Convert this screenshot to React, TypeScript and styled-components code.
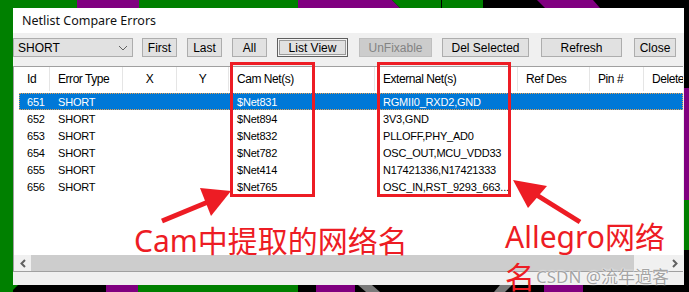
import styled, { createGlobalStyle } from "styled-components";

const GlobalStyle = createGlobalStyle`
    html, body {
        margin: 0;
        padding: 0;
        overflow: hidden;
        background: #000;
    }
`;

const Desktop = styled.div`
    position: relative;
    width: 689px;
    height: 292px;
    overflow: hidden;
    box-sizing: border-box;
    padding: 8px 0 0 13px;
`;

const Art = styled.svg`
    position: absolute;
    left: 0;
    top: 0;
`;

const Window = styled.div`
    position: relative;
    width: 671px;
    height: 277px;
    background: #f0f0f0;
    display: flex;
    flex-direction: column;
    font-family: "Liberation Sans", Arial, sans-serif;
`;

const TitleBar = styled.div`
    height: 25px;
    background: #fff;
    display: flex;
    align-items: center;
    padding-left: 9px;
    font-family: "Noto Sans", "Open Sans", sans-serif;
    font-size: 12.5px;
    color: #111;
`;

const Toolbar = styled.div`
    display: flex;
    gap: 9px;
    margin-top: 5px;
    height: 19px;
`;

const Combo = styled.div`
    width: 120px;
    box-sizing: border-box;
    border: 1px solid #adadad;
    background: #e1e1e1;
    display: flex;
    align-items: center;
    justify-content: space-between;
    padding: 0 4px 0 4px;
    font-size: 12px;
    color: #000;
`;

const Button = styled.div<{ $w: number; $push?: number; $pressed?: boolean; $disabled?: boolean }>`
    width: ${(p) => p.$w}px;
    margin-left: ${(p) => p.$push ?? 0}px;
    box-sizing: border-box;
    display: flex;
    align-items: center;
    justify-content: center;
    font-size: 12px;
    color: ${(p) => (p.$disabled ? "#838383" : "#000")};
    background: ${(p) => (p.$disabled ? "#cccccc" : "#e1e1e1")};
    border: 1px solid ${(p) => (p.$pressed ? "#5f5f5f" : p.$disabled ? "#bfbfbf" : "#adadad")};
    box-shadow: ${(p) => (p.$pressed ? "inset 0 0 0 1px #f4f4f4, inset 0 0 0 2px #9a9a9a" : "none")};
`;

const ListBox = styled.div`
    margin-top: 9px;
    width: 670px;
    height: 206px;
    box-sizing: border-box;
    border-top: 1px solid #a0a0a0;
    border-left: 1px solid #a0a0a0;
    border-bottom: 1px solid #a0a0a0;
    background: #fff;
    display: flex;
    flex-direction: column;
    overflow: hidden;
`;

const columns = "31px 73px 54px 52px 146px 143px 72px 54px 60px";

const Header = styled.div`
    display: grid;
    grid-template-columns: ${columns};
    height: 24px;
    padding-left: 5px;
    font-size: 12px;
    letter-spacing: -0.45px;
    color: #000;
`;

const HeadCell = styled.div<{ $center?: boolean }>`
    display: flex;
    align-items: center;
    justify-content: ${(p) => (p.$center ? "center" : "flex-start")};
    padding-left: ${(p) => (p.$center ? 0 : 8)}px;
    border-right: 1px solid #e5e5e5;
    white-space: nowrap;
    overflow: hidden;
`;

const Rows = styled.div`
    flex: 1;
    padding: 2px 0 0 5px;
`;

const Row = styled.div<{ $selected?: boolean }>`
    display: grid;
    grid-template-columns: ${columns};
    height: 17px;
    box-sizing: border-box;
    font-size: 11px;
    letter-spacing: -0.2px;
    color: ${(p) => (p.$selected ? "#fff" : "#000")};
    background: ${(p) => (p.$selected ? "#0078d7" : "transparent")};
    border: 1px dotted ${(p) => (p.$selected ? "#e8a050" : "transparent")};
`;

const Cell = styled.div`
    display: flex;
    align-items: center;
    padding-left: 7px;
    white-space: nowrap;
    overflow: hidden;
`;

const ScrollBar = styled.div`
    height: 16px;
    display: flex;
    background: #f0f0f0;
`;

const ScrollArrow = styled.div`
    width: 17px;
    display: flex;
    align-items: center;
    justify-content: center;
`;

const Thumb = styled.div`
    width: 603px;
    background: #cdcdcd;
`;

const Track = styled.div`
    flex: 1;
`;

const Overlay = styled.svg`
    position: absolute;
    left: 0;
    top: 0;
    pointer-events: none;
`;

const Note = styled.div<{ $x: number; $y: number; $w?: number }>`
    position: absolute;
    left: ${(p) => p.$x}px;
    top: ${(p) => p.$y}px;
    width: ${(p) => (p.$w ? `${p.$w}px` : "auto")};
    font-family: "Noto Sans", "Noto Sans CJK SC", sans-serif;
    font-size: 30px;
    line-height: 40px;
    color: #ed1c24;
    white-space: ${(p) => (p.$w ? "normal" : "nowrap")};
`;

const Watermark = styled.div`
    position: absolute;
    left: 536px;
    top: 263px;
    font-family: "Noto Sans", "Noto Sans CJK SC", sans-serif;
    font-size: 17px;
    color: #a4a4a4;
    white-space: nowrap;
    text-shadow: 0 0 1px #fff, 0 0 2px #fff;
`;

const rows = [
    { id: "651", cam: "$Net831", ext: "RGMII0_RXD2,GND" },
    { id: "652", cam: "$Net894", ext: "3V3,GND" },
    { id: "653", cam: "$Net832", ext: "PLLOFF,PHY_AD0" },
    { id: "654", cam: "$Net782", ext: "OSC_OUT,MCU_VDD33" },
    { id: "655", cam: "$Net414", ext: "N17421336,N17421333" },
    { id: "656", cam: "$Net765", ext: "OSC_IN,RST_9293_663..." },
];

const G = "#008000";
const P = "#800080";

const App = () => {
    return (
        <Desktop>
            <GlobalStyle />
            <Art width="689" height="292">
                <rect width="689" height="292" fill="#000" />
                <rect x="0" y="0" width="13" height="292" fill={G} />
                <rect x="0" y="0" width="77" height="8" fill={G} />
                <rect x="77" y="0" width="62" height="8" fill={P} />
                <rect x="139" y="0" width="159" height="8" fill={G} />
                <polygon points="298,0 392,0 400,8 298,8" fill={P} />
                <polygon points="392,0 483,0 483,8 400,8" fill={G} />
                <rect x="441" y="0" width="1" height="8" fill="#000" />
                <polygon points="537,0 593,0 600,8 545,8" fill={P} />
                <rect x="684" y="88" width="5" height="112" fill={P} />
                <rect x="684" y="200" width="5" height="50" fill={G} />
                <polygon points="13,285 18,285 13,290" fill={G} />
                <rect x="106" y="285" width="32" height="7" fill={P} />
                <rect x="138" y="285" width="160" height="7" fill={G} />
                <rect x="316" y="285" width="39" height="7" fill={P} />
                <polygon points="358,285 372,285 380,292 366,292" fill="#7a7a7a" />
                <polygon points="500,285 512,285 505,292 494,292" fill="#7a7a7a" />
                <rect x="544" y="285" width="39" height="7" fill={P} />
            </Art>
            <Window>
                <TitleBar>Netlist Compare Errors</TitleBar>
                <Toolbar>
                    <Combo>
                        SHORT
                        <svg width="10" height="6" viewBox="0 0 10 6">
                            <polyline points="1,1 5,5 9,1" fill="none" stroke="#606060" strokeWidth="1" />
                        </svg>
                    </Combo>
                    <Button $w={35}>First</Button>
                    <Button $w={35} $push={1}>Last</Button>
                    <Button $w={35} $push={1}>All</Button>
                    <Button $w={71} $push={1} $pressed>List View</Button>
                    <Button $w={73} $push={2} $disabled>UnFixable</Button>
                    <Button $w={87} $push={1}>Del Selected</Button>
                    <Button $w={81} $push={3}>Refresh</Button>
                    <Button $w={42} $push={3}>Close</Button>
                </Toolbar>
                <ListBox>
                    <Header>
                        <HeadCell>Id</HeadCell>
                        <HeadCell>Error Type</HeadCell>
                        <HeadCell $center>X</HeadCell>
                        <HeadCell $center>Y</HeadCell>
                        <HeadCell>Cam Net(s)</HeadCell>
                        <HeadCell>External Net(s)</HeadCell>
                        <HeadCell>Ref Des</HeadCell>
                        <HeadCell>Pin #</HeadCell>
                        <HeadCell>Delete</HeadCell>
                    </Header>
                    <Rows>
                        {rows.map((r, i) => (
                            <Row key={r.id} $selected={i === 0}>
                                <Cell>{r.id}</Cell>
                                <Cell>SHORT</Cell>
                                <Cell />
                                <Cell />
                                <Cell>{r.cam}</Cell>
                                <Cell>{r.ext}</Cell>
                                <Cell />
                                <Cell />
                                <Cell />
                            </Row>
                        ))}
                    </Rows>
                    <ScrollBar>
                        <ScrollArrow>
                            <svg width="6" height="9" viewBox="0 0 6 9">
                                <polyline points="5,1 1.5,4.5 5,8" fill="none" stroke="#606060" strokeWidth="2" />
                            </svg>
                        </ScrollArrow>
                        <Thumb />
                        <Track />
                        <ScrollArrow>
                            <svg width="6" height="9" viewBox="0 0 6 9">
                                <polyline points="1,1 4.5,4.5 1,8" fill="none" stroke="#606060" strokeWidth="2" />
                            </svg>
                        </ScrollArrow>
                    </ScrollBar>
                </ListBox>
            </Window>
            <Overlay width="689" height="292">
                <rect x="231.5" y="63.5" width="82" height="132" fill="none" stroke="#ed1c24" strokeWidth="3" />
                <rect x="378.5" y="63.5" width="131" height="132" fill="none" stroke="#ed1c24" strokeWidth="3" />
                <line x1="162" y1="221" x2="208" y2="202" stroke="#ed1c24" strokeWidth="5" />
                <polygon points="200,188 211,216 231,191" fill="#ed1c24" />
                <line x1="580" y1="222" x2="535" y2="194" stroke="#ed1c24" strokeWidth="5" />
                <polygon points="513,180 547,186 528,208" fill="#ed1c24" />
            </Overlay>
            <Note $x={134} $y={221}>Cam中提取的网络名</Note>
            <Watermark>CSDN @流年過客</Watermark>
            <Note $x={505} $y={217} $w={168}>Allegro网络名</Note>
        </Desktop>
    );
};

export default App;
